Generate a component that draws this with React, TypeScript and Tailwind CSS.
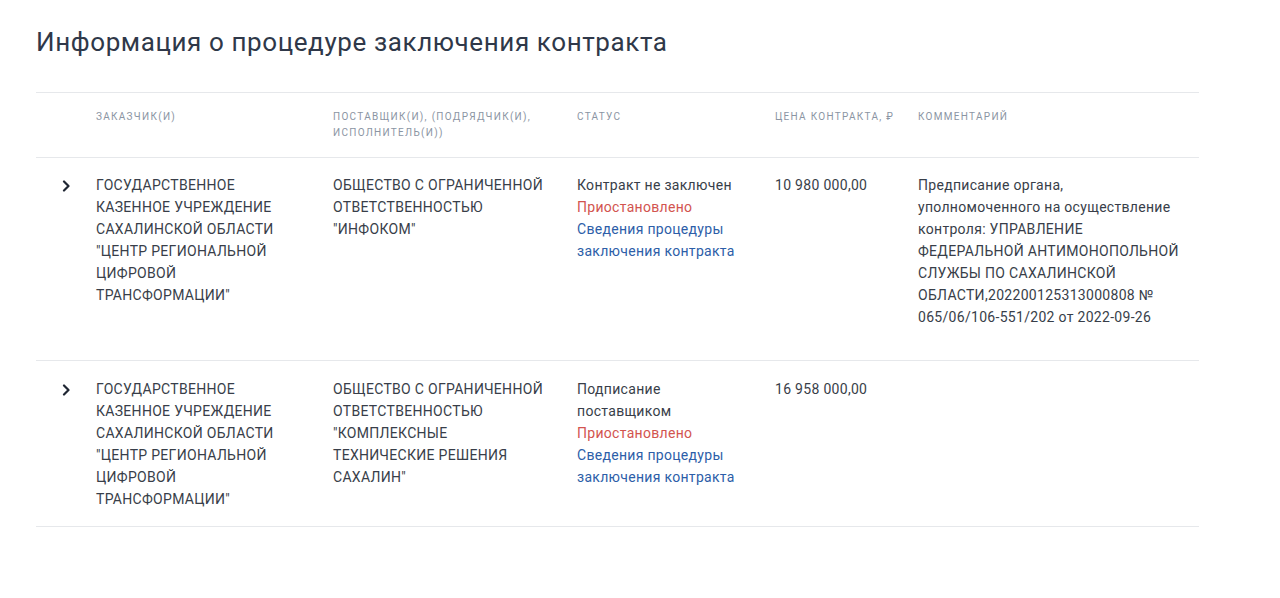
import React from "react";

const Chevron = () => (
  <svg width="10" height="12" viewBox="0 0 10 12" className="mt-[6px] ml-[25px]">
    <path d="M3 1.5 L7.5 6 L3 10.5" fill="none" stroke="#1f2633" strokeWidth="2.2" strokeLinecap="round" strokeLinejoin="round" />
  </svg>
);

type Row = {
  customer: string;
  supplier: string;
  status: string;
  price: string;
  comment: string;
  extra?: boolean;
};

const rows: Row[] = [
  {
    customer: 'ГОСУДАРСТВЕННОЕ КАЗЕННОЕ УЧРЕЖДЕНИЕ САХАЛИНСКОЙ ОБЛАСТИ "ЦЕНТР РЕГИОНАЛЬНОЙ ЦИФРОВОЙ ТРАНСФОРМАЦИИ"',
    supplier: 'ОБЩЕСТВО С ОГРАНИЧЕННОЙ ОТВЕТСТВЕННОСТЬЮ "ИНФОКОМ"',
    status: "Контракт не заключен",
    price: "10 980 000,00",
    comment:
      "Предписание органа, уполномоченного на осуществление контроля: УПРАВЛЕНИЕ ФЕДЕРАЛЬНОЙ АНТИМОНОПОЛЬНОЙ СЛУЖБЫ ПО САХАЛИНСКОЙ ОБЛАСТИ,202200125313000808 № 065/06/106-551/202 от 2022-09-26",
    extra: true,
  },
  {
    customer: 'ГОСУДАРСТВЕННОЕ КАЗЕННОЕ УЧРЕЖДЕНИЕ САХАЛИНСКОЙ ОБЛАСТИ "ЦЕНТР РЕГИОНАЛЬНОЙ ЦИФРОВОЙ ТРАНСФОРМАЦИИ"',
    supplier: 'ОБЩЕСТВО С ОГРАНИЧЕННОЙ ОТВЕТСТВЕННОСТЬЮ "КОМПЛЕКСНЫЕ ТЕХНИЧЕСКИЕ РЕШЕНИЯ САХАЛИН"',
    status: "Подписание поставщиком",
    price: "16 958 000,00",
    comment: "",
  },
];

const grid = "grid grid-cols-[60px_237px_244px_198px_143px_1fr]";

export default function App() {
  return (
    <div className="min-h-[598px] bg-white font-['Roboto','Liberation_Sans',sans-serif] text-[#383e49]">
      <div className="w-[1163px] ml-[36px] pt-[25px]">
        <h1 className="text-[26px] leading-[34px] text-[#2f3849] font-normal tracking-[0.6px]">
          Информация о процедуре заключения контракта
        </h1>
        <div className="mt-[33px] border-t border-[#e6e8eb]">
          <div className={`${grid} pt-[16px] pb-[16px] border-b border-[#e6e8eb] text-[10px] leading-[16px] uppercase tracking-[1.3px] text-[#8b95a3]`}>
            <div />
            <div className="pr-6">Заказчик(и)</div>
            <div className="pr-6">Поставщик(и), (подрядчик(и), исполнитель(и))</div>
            <div className="pr-6">Статус</div>
            <div className="pr-4">Цена контракта, ₽</div>
            <div className="pr-4">Комментарий</div>
          </div>
          {rows.map((r, i) => (
            <div
              key={i}
              className={`${grid} ${r.extra ? "pt-[16px] pb-[32px]" : "pt-[17px] pb-[16px]"} border-b border-[#e6e8eb] text-[14px] leading-[22px] tracking-[0.3px]`}
            >
              <div>
                <Chevron />
              </div>
              <div className="pr-[37px]">{r.customer}</div>
              <div className="pr-[29px]">{r.supplier}</div>
              <div className="pr-[33px]">
                <div>{r.status}</div>
                <div className="text-[#d2544f]">Приостановлено</div>
                <div className="text-[#2d5ea8]">Сведения процедуры заключения контракта</div>
              </div>
              <div className="pr-4">{r.price}</div>
              <div className="pr-[14px]">{r.comment}</div>
            </div>
          ))}
        </div>
      </div>
    </div>
  );
}
